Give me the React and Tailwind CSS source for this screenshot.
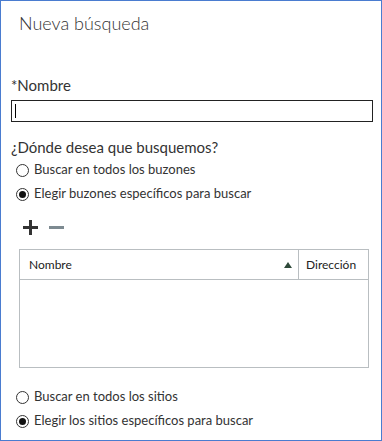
import React, { useState } from 'react';

const font = { fontFamily: '"Segoe UI", Lato, "Noto Sans", sans-serif' };

function Radio({ checked, label, onClick }) {
  return (
    <label onClick={onClick} className="flex items-center gap-[5px] h-[24px] text-[13px] text-[#333] cursor-pointer">
      <span className="w-[13px] h-[13px] rounded-full border border-[#333] flex items-center justify-center bg-white">
        {checked && <span className="w-[7px] h-[7px] rounded-full bg-[#111]" />}
      </span>
      <span>{label}</span>
    </label>
  );
}

export default function App() {
  const [scope, setScope] = useState('specific');
  const [sites, setSites] = useState('specific');

  return (
    <div style={font} className="w-[382px] h-[441px] bg-white border border-[#4a7cd0] flex flex-col overflow-hidden">
      <div className="pl-[18px] pt-[8px] h-[40px] text-[18px] font-light text-[#333] leading-[28px]">Nueva búsqueda</div>

      <div className="px-[10px] mt-[34px]">
        <div className="text-[15px] text-[#333] leading-[20px]">*Nombre</div>
        <div className="mt-[5px] h-[22px] w-[362px] border border-[#222] flex items-center pl-[3px]">
          <span className="w-px h-[14px] bg-black" />
        </div>

        <div className="mt-[15px] text-[15px] text-[#333] leading-[20px]">¿Dónde desea que busquemos?</div>
        <div className="pl-[5px] mt-[1px]">
          <Radio checked={scope === 'all'} label="Buscar en todos los buzones" onClick={() => setScope('all')} />
          <Radio checked={scope === 'specific'} label="Elegir buzones específicos para buscar" onClick={() => setScope('specific')} />
        </div>

        <div className="flex items-center gap-[11px] pl-[12px] mt-[11px] h-[20px]">
          <svg width="15" height="15" viewBox="0 0 15 15"><path d="M6 0h3v6h6v3H9v6H6V9H0V6h6z" fill="#333" /></svg>
          <svg width="15" height="15" viewBox="0 0 15 15"><path d="M0 6h15v3H0z" fill="#7d8a91" /></svg>
        </div>

        <div className="ml-[8px] mt-[12px] w-[350px] h-[119px] border border-[#b9bec1] flex flex-col">
          <div className="flex h-[30px] border-b border-[#b9bec1] text-[12px] text-[#222]">
            <div className="flex-1 flex items-center justify-between pl-[9px] pr-[6px]">
              <span>Nombre</span>
              <svg width="8" height="6" viewBox="0 0 8 6"><path d="M4 0l4 6H0z" fill="#2f4a3a" /></svg>
            </div>
            <div className="w-[70px] border-l border-[#b9bec1] flex items-center pl-[7px]">Dirección</div>
          </div>
        </div>

        <div className="pl-[5px] mt-[17px]">
          <Radio checked={sites === 'all'} label="Buscar en todos los sitios" onClick={() => setSites('all')} />
          <Radio checked={sites === 'specific'} label="Elegir los sitios específicos para buscar" onClick={() => setSites('specific')} />
        </div>
      </div>
    </div>
  );
}
